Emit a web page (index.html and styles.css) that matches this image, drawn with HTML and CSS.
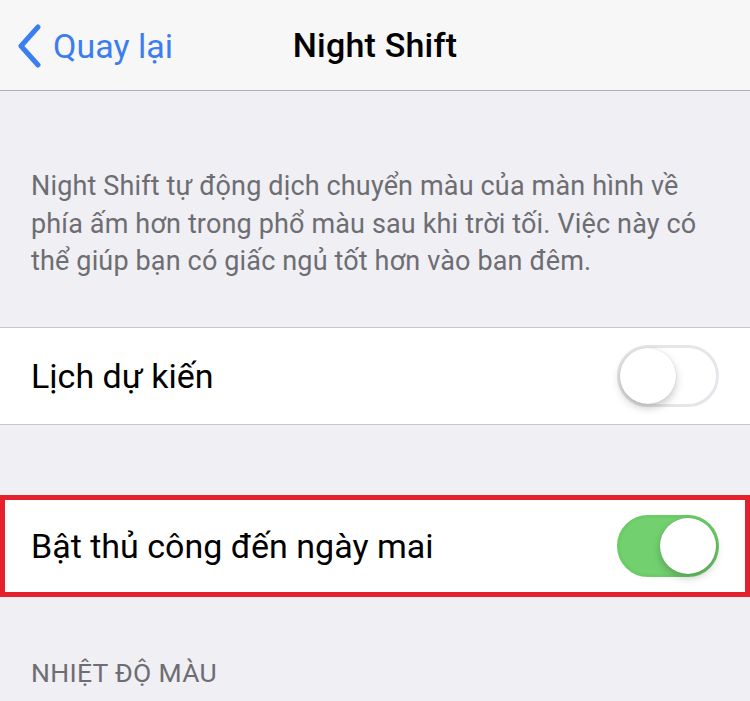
FILE: index.html
```html
<!DOCTYPE html>
<html lang="vi">
  <head>
    <meta charset="UTF-8">
    <meta name="viewport" content="width=device-width, initial-scale=1.0">
    <title>Night Shift</title>
    <link rel="stylesheet" href="styles.css">
  </head>
  <body>
    <!-- Top navigation bar -->
    <header class="nav-bar">
      <a class="back-link" href="#">
        <svg class="back-chevron" width="26" height="44" viewBox="0 0 26 44">
          <path d="M22 3 L5 22 L22 41" fill="none" stroke="#3b7ef0" stroke-width="5" stroke-linecap="round" stroke-linejoin="round"/>
        </svg>
        <span>Quay lại</span>
      </a>
      <h1 class="nav-title">Night Shift</h1>
    </header>

    <p class="group-note">Night Shift tự động dịch chuyển màu của màn hình về phía ấm hơn trong phổ màu sau khi trời tối. Việc này có thể giúp bạn có giấc ngủ tốt hơn vào ban đêm.</p>

    <!-- Scheduled -->
    <div class="group">
      <div class="row">
        <span class="row-label">Lịch dự kiến</span>
        <span class="switch"><span class="knob"></span></span>
      </div>
    </div>

    <!-- Manual enable -->
    <div class="group highlight">
      <div class="row">
        <span class="row-label">Bật thủ công đến ngày mai</span>
        <span class="switch on"><span class="knob"></span></span>
      </div>
    </div>

    <h2 class="group-header">Nhiệt độ màu</h2>
  </body>
</html>
```

FILE: styles.css
```css
/* iOS settings look */
body {
  margin: 0;
  padding: 0;
  background: #efeff4;
  font-family: Roboto, "Noto Sans", sans-serif;
  color: #000;
  overflow: hidden;
}

.nav-bar {
  height: 90px;
  background: #f7f7f8;
  border-bottom: 1px solid #b1b1b4;
  display: flex;
  align-items: center;
  justify-content: center;
  position: relative;
}

.back-link {
  position: absolute;
  left: 16px;
  top: 24px;
  display: flex;
  align-items: center;
  gap: 11px;
  color: #3b7ef0;
  text-decoration: none;
  font-size: 34px;
}

.back-chevron {
  display: block;
}

.nav-title {
  margin: 0;
  font-size: 34px;
  font-weight: 500;
  letter-spacing: 0.2px;
}

.group-note {
  margin: 77px 0 0;
  padding: 0 31px;
  font-size: 27px;
  line-height: 37.5px;
  letter-spacing: 0.15px;
  color: #6d6d72;
}

.group {
  background: #fff;
  border-top: 1px solid #c8c7cc;
  border-bottom: 1px solid #c8c7cc;
  margin-top: 46px;
}

.row {
  height: 96px;
  display: flex;
  align-items: center;
  justify-content: space-between;
  padding: 0 31px;
}

.row-label {
  font-size: 34px;
}

.highlight {
  margin-top: 70px;
  border: 5px solid #e3202b;
}

.highlight .row {
  height: 92px;
  padding: 0 26px;
}

.switch {
  width: 102px;
  height: 62px;
  box-sizing: border-box;
  border-radius: 31px;
  border: 3px solid #e6e6ea;
  background: #fff;
  position: relative;
}

.switch .knob {
  position: absolute;
  top: 0;
  left: 0;
  width: 56px;
  height: 56px;
  border-radius: 50%;
  background: #fff;
  box-shadow: 0 4px 8px rgba(0, 0, 0, 0.22), 0 0 1px rgba(0, 0, 0, 0.18);
}

.switch.on {
  background: #72d16e;
  border-color: #6acb67;
}

.switch.on .knob {
  left: 40px;
}

.group-header {
  margin: 60px 0 0;
  padding: 0 31px;
  font-size: 26.5px;
  font-weight: 400;
  text-transform: uppercase;
  color: #6d6d72;
  letter-spacing: 0.3px;
}
```
